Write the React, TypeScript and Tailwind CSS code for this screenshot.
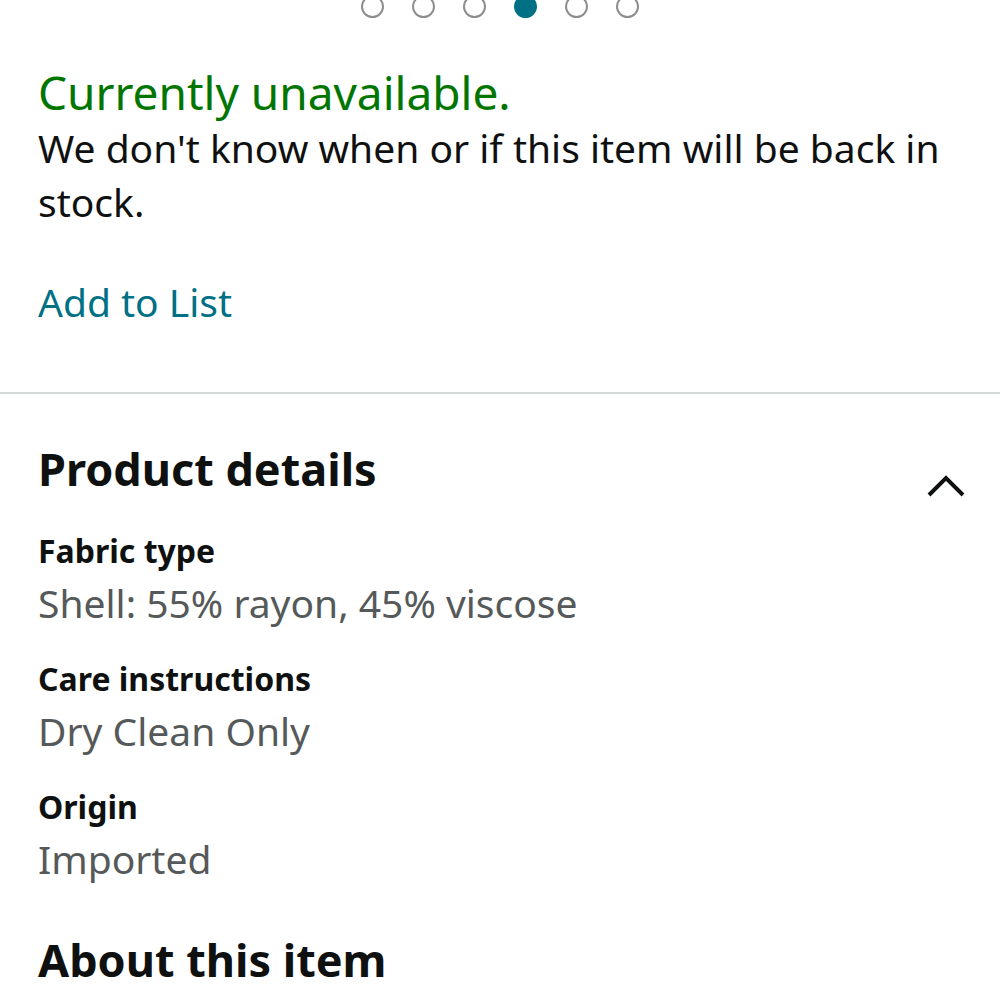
const font = { fontFamily: '"Noto Sans", "Open Sans", sans-serif' };

const details = [
  { label: "Fabric type", value: "Shell: 55% rayon, 45% viscose" },
  { label: "Care instructions", value: "Dry Clean Only" },
  { label: "Origin", value: "Imported" },
];

function Dots() {
  return (
    <div className="flex justify-center gap-[28px] -mt-[5px]">
      {[0, 1, 2, 3, 4, 5].map((i) =>
        i === 3 ? (
          <div key={i} className="w-[23px] h-[23px] rounded-full bg-[#007185]" />
        ) : (
          <div key={i} className="w-[23px] h-[23px] rounded-full border-2 border-[#8d8d8d]" />
        )
      )}
    </div>
  );
}

export default function App() {
  return (
    <div className="w-[1000px] h-[1000px] bg-white overflow-hidden" style={font}>
      <Dots />

      <div className="px-[38px] mt-[47px]">
        <div className="text-[46px] leading-[54px] text-[#007600]">Currently unavailable.</div>
        <div className="mt-[2px] text-[39px] leading-[54px] text-[#0f1111]">
          We don't know when or if this item will be back in stock.
        </div>
        <div className="mt-[46px] text-[39px] leading-[54px] text-[#007185]">Add to List</div>
      </div>

      <div className="mt-[63px] h-[2px] bg-[#d5d9d9]" />

      <div className="px-[38px] pr-[34px] mt-[48px]">
        <div className="flex items-start justify-between">
          <h2 className="text-[45px] leading-[54px] font-bold text-[#0f1111]">Product details</h2>
          <svg width="40" height="24" viewBox="0 0 40 24" className="mt-[32px]">
            <path d="M3 21 L20 4 L37 21" fill="none" stroke="#0f1111" strokeWidth="4" />
          </svg>
        </div>

        <div className="mt-[33px] flex flex-col gap-[31px]">
          {details.map((d) => (
            <div key={d.label}>
              <div className="text-[32px] leading-[40px] font-bold text-[#0f1111]">{d.label}</div>
              <div className="mt-[7px] text-[39px] leading-[50px] text-[#565959]">{d.value}</div>
            </div>
          ))}
        </div>

        <h2 className="mt-[49px] text-[45px] leading-[54px] font-bold text-[#0f1111]">About this item</h2>
      </div>
    </div>
  );
}
